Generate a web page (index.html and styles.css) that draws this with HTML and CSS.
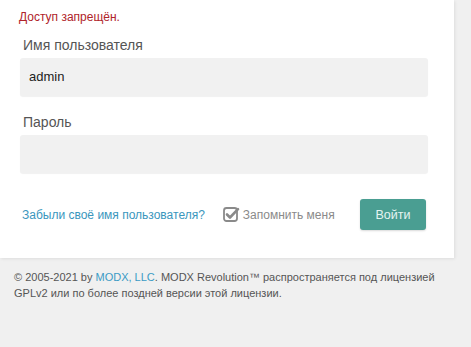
FILE: index.html
```html
<!DOCTYPE html>
<html lang="ru">
<head>
<meta charset="utf-8">
<link rel="stylesheet" href="styles.css">
</head>
<body>
<div class="panel">
  <p class="error">Доступ запрещён.</p>
  <div class="field">
    <label class="label">Имя пользователя</label>
    <div class="input">admin</div>
  </div>
  <div class="field">
    <label class="label">Пароль</label>
    <div class="input"></div>
  </div>
  <div class="actions">
    <a class="forgot" href="#">Забыли своё имя пользователя?</a>
    <span class="remember">
      <svg class="check" width="17" height="17" viewBox="0 0 17 17">
        <rect x="1" y="2" width="13" height="13" rx="2.5" fill="none" stroke="#8a8a8a" stroke-width="1.8"/>
        <path d="M4 8.5 L7 11.5 L15 3.2" fill="none" stroke="#8a8a8a" stroke-width="2.6" stroke-linecap="round" stroke-linejoin="round"/>
      </svg>
      Запомнить меня
    </span>
    <button class="btn">Войти</button>
  </div>
</div>
<footer class="footer">
  © 2005-2021 by <a href="#">MODX, LLC</a>. MODX Revolution™ распространяется под лицензией GPLv2 или по более поздней версии этой лицензии.
</footer>
</body>
</html>
```
FILE: styles.css
```css
html, body {
  margin: 0;
  padding: 0;
}
body {
  background: #f0f0f0;
  font-family: "Liberation Sans", Arial, sans-serif;
  width: 471px;
  height: 347px;
  overflow: hidden;
}
.panel {
  box-sizing: border-box;
  width: 454px;
  background: #fff;
  padding: 10px 26px 28px 20px;
  box-shadow: 1px 1px 3px rgba(0,0,0,0.08);
}
.error {
  margin: 0 0 12px -1px;
  color: #b0232a;
  font-size: 12px;
  line-height: 14px;
}
.field {
  margin-bottom: 17px;
}
.label {
  display: block;
  padding-left: 3px;
  color: #555;
  font-size: 14px;
  line-height: 18px;
  margin-bottom: 4px;
}
.input {
  box-sizing: border-box;
  height: 38px;
  background: #f1f1f1;
  border-radius: 3px;
  box-shadow: 0 1px 1px rgba(0,0,0,0.06);
  padding-left: 9px;
  font-size: 13px;
  line-height: 38px;
  color: #222;
}
.actions {
  display: flex;
  align-items: center;
  margin-top: 26px;
  padding-left: 2px;
}
.forgot {
  color: #3a96bd;
  font-size: 12px;
  text-decoration: none;
}
.remember {
  display: flex;
  align-items: center;
  gap: 3px;
  margin-left: 18px;
  color: #8a8a8a;
  font-size: 12px;
}
.check {
  display: block;
}
.btn {
  margin-left: auto;
  margin-right: 2px;
  width: 66px;
  height: 31px;
  border: 0;
  border-radius: 3px;
  background: #4a9e92;
  color: #e6f4f1;
  font-family: inherit;
  font-size: 12.5px;
  box-shadow: 0 1px 2px rgba(0,0,0,0.15);
}
.footer {
  padding: 11px 20px 0 14px;
  font-size: 11px;
  line-height: 16px;
  color: #555;
}
.footer a {
  color: #3b9bc5;
  text-decoration: none;
}
```
